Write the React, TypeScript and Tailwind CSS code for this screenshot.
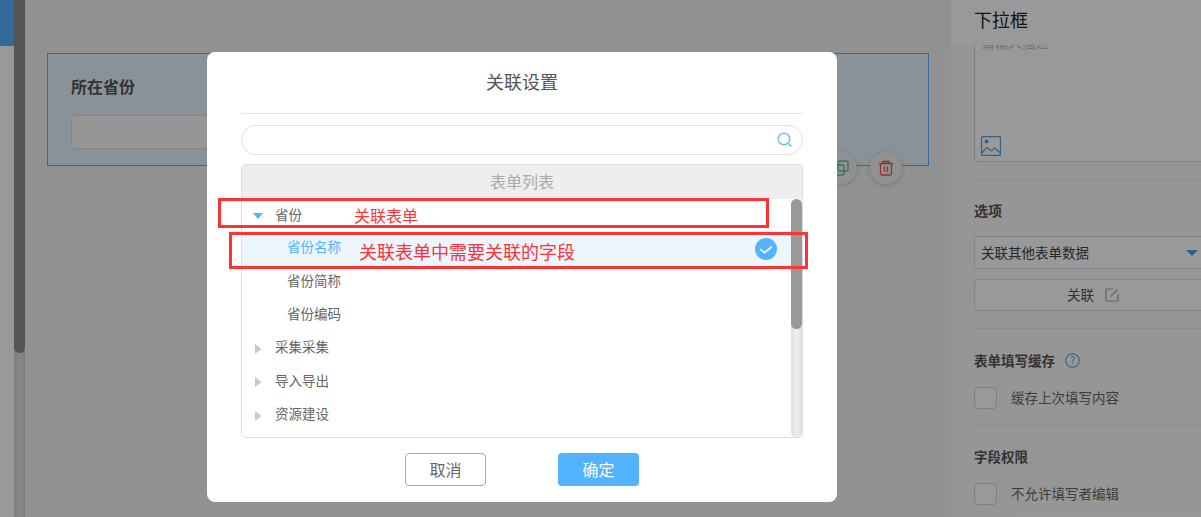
import React from "react";

const treeRows = [
  { label: "省份", kind: "open" },
  { label: "省份名称", kind: "active" },
  { label: "省份简称", kind: "child" },
  { label: "省份编码", kind: "child" },
  { label: "采集采集", kind: "closed" },
  { label: "导入导出", kind: "closed" },
  { label: "资源建设", kind: "closed" },
];

const CheckRow = ({ label }: { label: string }) => (
  <div className="flex items-center gap-[14px]">
    <div className="w-[23px] h-[22px] rounded-[4px] border border-[#d5d5d5] bg-white" />
    <span className="text-[13.5px] leading-[20px] pb-[2px] text-[#666]">{label}</span>
  </div>
);

const Caret = ({ open }: { open: boolean }) =>
  open ? (
    <svg width="12" height="8" viewBox="0 0 12 8" className="shrink-0">
      <path d="M0 1h10L5 7z" fill="#54b3ff" />
    </svg>
  ) : (
    <svg width="12" height="12" viewBox="0 0 12 12" className="shrink-0">
      <path d="M2 1l6.5 5L2 11z" fill="#c8c8c8" />
    </svg>
  );

const TreeRow = ({ label, kind }: { label: string; kind: string }) => {
  if (kind === "open" || kind === "closed") {
    return (
      <div className="h-[33.33px] flex items-center gap-[10px] pl-[11px] text-[13.5px] text-[#666]">
        <Caret open={kind === "open"} />
        <span className={kind === "open" ? "pb-[3px]" : "pb-[5px]"}>{label}</span>
      </div>
    );
  }
  const active = kind === "active";
  return (
    <div
      className={
        active
          ? "h-[33.33px] flex items-center justify-between pl-[45px] pr-[14px] text-[13.5px] text-[#54b3ff] bg-[#edf6ff]"
          : "h-[33.33px] flex items-center pl-[45px] text-[13.5px] text-[#666]"
      }
    >
      <span className="pb-[5px]">{label}</span>
      {active && (
        <svg width="22" height="22" viewBox="0 0 22 22">
          <circle cx="11" cy="11" r="11" fill="#54b3ff" />
          <path d="M5 11l4.5 3.7L17 8.7" fill="none" stroke="#fff" strokeWidth="1.6" />
        </svg>
      )}
    </div>
  );
};

const RoundAction = ({ children }: { children: React.ReactNode }) => (
  <div className="w-[32px] h-[32px] rounded-full bg-[#f2f2f2] shadow-[0_1px_5px_rgba(0,0,0,0.18)] flex items-center justify-center">
    {children}
  </div>
);

const Divider = () => <div className="h-px bg-[#e6e6e6]" />;

export default function App() {
  return (
    <div className="relative h-[517px] w-[1201px] overflow-hidden flex font-['Noto_Sans_CJK_SC','Liberation_Sans',sans-serif]">
      {/* left rail */}
      <div className="w-[14px] bg-white">
        <div className="h-[46px] bg-[#54b3ff]" />
      </div>
      <div className="w-[11px] flex flex-col bg-linear-to-r from-[#d2d2d2] via-[#e2e2e2] to-[#d2d2d2]">
        <div className="h-[353px] rounded-b-[6px] bg-[#8e8e8e]" />
      </div>

      {/* canvas */}
      <div className="w-[926px] bg-[#f2f2f2] pl-[22px] pt-[53px]">
        <div className="relative w-[882px] h-[113px] border border-[#54b3ff] bg-[#e6f3ff] pl-[23px] pt-[19px]">
          <div className="text-[16px] leading-[26px] font-bold text-[#555]">所在省份</div>
          <div className="mt-[16px] w-[700px] h-[34px] rounded-[4px] border border-[#dcdcdc] bg-[#fbfbfb]" />
          <div className="absolute top-[98px] right-[26px] flex gap-[13px]">
            <RoundAction>
              <svg width="18" height="18" viewBox="0 0 18 18" fill="none" stroke="#55c79a" strokeWidth="1.4">
                <rect x="6" y="2" width="10" height="10" rx="2" />
                <rect x="2" y="6" width="10" height="10" rx="2" />
              </svg>
            </RoundAction>
            <RoundAction>
              <svg width="16" height="16" viewBox="0 0 16 16" fill="none" stroke="#f05656" strokeWidth="1.3">
                <path d="M1 3.5h14M5 3.5V1.5h6v2M2.5 3.5v10a1.5 1.5 0 0 0 1.5 1.5h8a1.5 1.5 0 0 0 1.5-1.5v-10M6.5 6.5v5.5M9.5 6.5v5.5" />
              </svg>
            </RoundAction>
          </div>
        </div>
      </div>

      {/* settings panel */}
      <div className="w-[250px] bg-[#fbfbfb] overflow-hidden">
        <div className="relative z-10 h-[45px] bg-white pl-[23px] pt-[6px] text-[18px] leading-[26px] text-[#222]">下拉框</div>
        <div className="w-[290px] pl-[23px]">
          <div className="h-[117px] rounded-b-[4px] border border-t-0 border-[#d8d8d8] bg-white flex flex-col justify-between overflow-hidden pl-[6px] pb-[5px]">
            <div className="-mt-[11px] text-[13.5px] leading-[16px] text-[#bbb]">请输入描述</div>
            <svg width="20" height="20" viewBox="0 0 20 20" fill="none" stroke="#54a3e6" strokeWidth="1.2">
              <rect x="0.6" y="0.6" width="18.8" height="18.8" rx="1" />
              <circle cx="5.5" cy="5.5" r="2" fill="#54a3e6" stroke="none" />
              <path d="M1 17l5-5.5 4.5 3.5 3-3 6 5" />
            </svg>
          </div>
          <div className="mt-[17px]">
            <Divider />
          </div>
          <div className="mt-[20px] text-[14px] leading-[20px] font-bold text-[#555]">选项</div>
          <div className="mt-[16px] h-[33px] rounded-[4px] border border-[#dcdcdc] bg-white flex items-center pl-[6px] text-[13.5px] text-[#444]">
            <span>关联其他表单数据</span>
            <svg width="12" height="8" viewBox="0 0 12 8" className="ml-[97px]">
              <path d="M0 1h12L6 7z" fill="#4a9fe6" />
            </svg>
          </div>
          <div className="mt-[10px] h-[32px] rounded-[4px] border border-[#dcdcdc] bg-white flex items-center pl-[92px] text-[13.5px] text-[#555]">
            <span className="pb-[2px]">关联</span>
            <svg width="14" height="14" viewBox="0 0 14 14" fill="none" stroke="#aaa" strokeWidth="1.2" className="ml-[11px]">
              <path d="M8 1H1v12h12V6" />
              <path d="M5.5 8.5L12.5 1.5" />
            </svg>
          </div>
          <div className="mt-[17px]">
            <Divider />
          </div>
          <div className="mt-[21px] flex items-center gap-[10px]">
            <span className="text-[13.5px] leading-[20px] font-bold text-[#555]">表单填写缓存</span>
            <svg width="15" height="15" viewBox="0 0 15 15">
              <circle cx="7.5" cy="7.5" r="6.8" fill="none" stroke="#54a3e6" strokeWidth="1.1" />
              <text x="7.5" y="11" textAnchor="middle" fontSize="10" fill="#54a3e6">?</text>
            </svg>
          </div>
          <div className="mt-[17px]">
            <CheckRow label="缓存上次填写内容" />
          </div>
          <div className="mt-[16px]">
            <Divider />
          </div>
          <div className="mt-[20px] text-[13.5px] leading-[20px] font-bold text-[#555]">字段权限</div>
          <div className="mt-[17px]">
            <CheckRow label="不允许填写者编辑" />
          </div>
        </div>
      </div>

      {/* dialog */}
      <div className="absolute inset-0 z-20 bg-black/40 pl-[207px] pt-[52px]">
        <div className="relative w-[630px] h-[450px] rounded-[8px] bg-white px-[34px]">
          <div className="h-[62px] border-b border-[#e6e6e6] pt-[15px] text-center text-[18px] leading-[28px] text-[#555]">关联设置</div>
          <div className="mt-[11px] h-[30px] rounded-full border border-[#e0e0e0] flex items-center justify-end pr-[9px]">
            <svg width="16" height="16" viewBox="0 0 16 16" fill="none" stroke="#6db8f5" strokeWidth="1.4">
              <circle cx="7" cy="7" r="5.8" />
              <path d="M11.5 11.5L14.5 14.5" />
            </svg>
          </div>
          <div className="mt-[9px] h-[274px] rounded-[4px] border border-[#dedede] overflow-hidden">
            <div className="h-[34px] bg-[#eeeeee] flex items-center justify-center pb-[3px] text-[16px] text-[#aaa]">表单列表</div>
            <div className="flex h-[238px]">
              <div className="flex-1">
                {treeRows.map((row) => (
                  <TreeRow key={row.label} label={row.label} kind={row.kind} />
                ))}
              </div>
              <div className="w-[11px] rounded-[6px] bg-linear-to-r from-[#e0e0e0] via-[#ededed] to-[#e0e0e0]">
                <div className="h-[130px] rounded-[6px] bg-[#999]" />
              </div>
            </div>
          </div>
          <div className="mt-[15px] flex justify-center gap-[72px]">
            <div className="w-[81px] h-[33px] pb-[2px] rounded-[4px] border border-[#aaa] flex items-center justify-center text-[16px] text-[#666]">取消</div>
            <div className="w-[81px] h-[33px] pb-[2px] rounded-[4px] bg-[#54b3ff] flex items-center justify-center text-[16px] text-white">确定</div>
          </div>

          {/* red annotations drawn over the screenshot */}
          <div className="absolute left-[11px] top-[146px] w-[551px] h-[30px] border-[3px] border-[#ff3333]" />
          <div className="absolute left-[22px] top-[180px] w-[579px] h-[37px] border-[3px] border-[#ff3333]" />
          <div className="absolute left-[147px] top-[151px] text-[16px] leading-[24px] text-[#ff3333]">关联表单</div>
          <div className="absolute left-[152px] top-[186px] text-[18px] leading-[26px] text-[#ff3333]">关联表单中需要关联的字段</div>
        </div>
      </div>
    </div>
  );
}
